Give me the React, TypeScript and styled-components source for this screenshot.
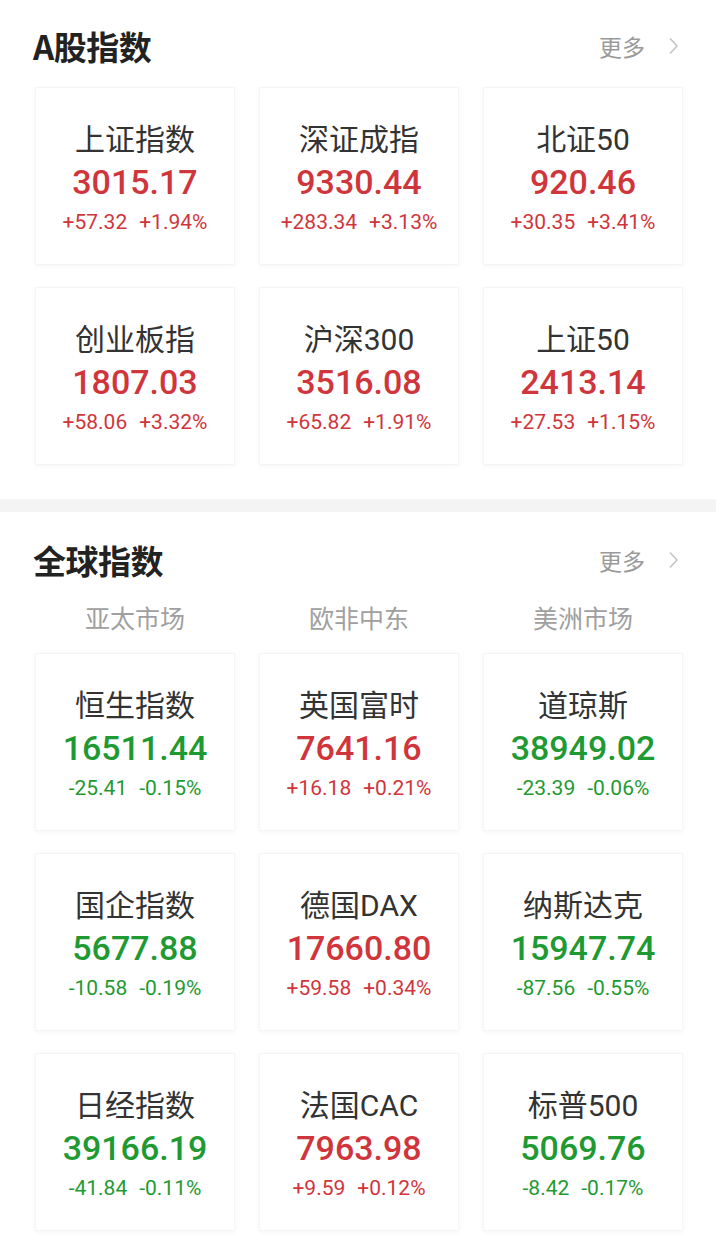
import React from 'react';
import styled, { createGlobalStyle } from 'styled-components';

type Tone = 'up' | 'down';

type IndexItem = {
  name: string;
  value: string;
  change: string;
  pct: string;
  tone: Tone;
};

const A_SHARES: IndexItem[] = [
  { name: '上证指数', value: '3015.17', change: '+57.32', pct: '+1.94%', tone: 'up' },
  { name: '深证成指', value: '9330.44', change: '+283.34', pct: '+3.13%', tone: 'up' },
  { name: '北证50', value: '920.46', change: '+30.35', pct: '+3.41%', tone: 'up' },
  { name: '创业板指', value: '1807.03', change: '+58.06', pct: '+3.32%', tone: 'up' },
  { name: '沪深300', value: '3516.08', change: '+65.82', pct: '+1.91%', tone: 'up' },
  { name: '上证50', value: '2413.14', change: '+27.53', pct: '+1.15%', tone: 'up' },
];

const MARKETS = ['亚太市场', '欧非中东', '美洲市场'];

const GLOBAL: IndexItem[] = [
  { name: '恒生指数', value: '16511.44', change: '-25.41', pct: '-0.15%', tone: 'down' },
  { name: '英国富时', value: '7641.16', change: '+16.18', pct: '+0.21%', tone: 'up' },
  { name: '道琼斯', value: '38949.02', change: '-23.39', pct: '-0.06%', tone: 'down' },
  { name: '国企指数', value: '5677.88', change: '-10.58', pct: '-0.19%', tone: 'down' },
  { name: '德国DAX', value: '17660.80', change: '+59.58', pct: '+0.34%', tone: 'up' },
  { name: '纳斯达克', value: '15947.74', change: '-87.56', pct: '-0.55%', tone: 'down' },
  { name: '日经指数', value: '39166.19', change: '-41.84', pct: '-0.11%', tone: 'down' },
  { name: '法国CAC', value: '7963.98', change: '+9.59', pct: '+0.12%', tone: 'up' },
  { name: '标普500', value: '5069.76', change: '-8.42', pct: '-0.17%', tone: 'down' },
];

const TONE_COLOR: Record<Tone, string> = {
  up: '#d0353b',
  down: '#1f9a32',
};

const GlobalStyle = createGlobalStyle`
  html, body {
    margin: 0;
    padding: 0;
    background: #fff;
  }

  body {
    font-family: Roboto, "Noto Sans CJK SC", "Noto Sans", sans-serif;
    -webkit-font-smoothing: antialiased;
  }
`;

const IndexCard = ({ item }: { item: IndexItem }) => (
  <Card>
    <Name>{item.name}</Name>
    <Value $tone={item.tone}>{item.value}</Value>
    <Change $tone={item.tone}>
      <span>{item.change}</span>
      <span>{item.pct}</span>
    </Change>
  </Card>
);

const SectionHeader = ({ title, top, height }: { title: string; top: number; height: number }) => (
  <Header $top={top} $height={height}>
    <Title>{title}</Title>
    <More>
      更多
      <svg width="12" height="20" viewBox="0 0 12 20" fill="none">
        <path d="M2.5 3 L9 10 L2.5 17" stroke="#c4c4c4" strokeWidth="1.6" strokeLinecap="round" strokeLinejoin="round" />
      </svg>
    </More>
  </Header>
);

const App = () => {
  return (
    <Page>
      <GlobalStyle />
      <Section $bottom={34}>
        <SectionHeader title="A股指数" top={4} height={87} />
        <Grid>
          {A_SHARES.map((item) => (
            <IndexCard item={item} key={item.name} />
          ))}
        </Grid>
      </Section>
      <Band />
      <Section $bottom={29}>
        <SectionHeader title="全球指数" top={10} height={86} />
        <MarketRow>
          {MARKETS.map((m) => (
            <MarketLabel key={m}>{m}</MarketLabel>
          ))}
        </MarketRow>
        <Grid>
          {GLOBAL.map((item) => (
            <IndexCard item={item} key={item.name} />
          ))}
        </Grid>
      </Section>
    </Page>
  );
};

export default App;

const Page = styled.div`
  width: 716px;
  min-height: 1260px;
  background: #fff;
  overflow: hidden;
`;

const Section = styled.section<{ $bottom: number }>`
  padding: 0 33px ${(p) => p.$bottom}px 35px;
`;

const Header = styled.div<{ $top: number; $height: number }>`
  box-sizing: border-box;
  height: ${(p) => p.$height}px;
  padding: ${(p) => p.$top}px 3px 0 0;
  margin-left: -2px;
  display: flex;
  align-items: center;
  justify-content: space-between;
`;

const Title = styled.div`
  font-family: "Noto Sans CJK SC", "Noto Sans", sans-serif;
  font-size: 33px;
  font-weight: 700;
  color: #222;
  letter-spacing: -0.5px;
`;

const More = styled.div`
  display: flex;
  align-items: center;
  gap: 23px;
  font-family: "Noto Sans CJK SC", sans-serif;
  font-size: 23px;
  color: #9a9a9a;

  svg {
    display: block;
  }
`;

const MarketRow = styled.div`
  display: grid;
  grid-template-columns: repeat(3, 200px);
  column-gap: 24px;
  height: 38px;
  margin-bottom: 17px;
  align-items: center;
`;

const MarketLabel = styled.div`
  text-align: center;
  font-family: "Noto Sans CJK SC", sans-serif;
  font-size: 25px;
  color: #a0a0a0;
`;

const Grid = styled.div`
  display: grid;
  grid-template-columns: repeat(3, 200px);
  grid-auto-rows: 178px;
  column-gap: 24px;
  row-gap: 22px;
`;

const Card = styled.div`
  box-sizing: border-box;
  background: #fff;
  border: 1px solid #f5f5f5;
  box-shadow: 0 1px 5px rgba(0, 0, 0, 0.045);
  display: flex;
  flex-direction: column;
  align-items: center;
  justify-content: center;
  padding-top: 8px;
`;

const Name = styled.div`
  font-family: Roboto, "Noto Sans CJK SC", sans-serif;
  font-size: 30px;
  line-height: 40px;
  color: #333;
`;

const Value = styled.div<{ $tone: Tone }>`
  font-family: Roboto, sans-serif;
  font-size: 34px;
  font-weight: 500;
  line-height: 44px;
  color: ${(p) => TONE_COLOR[p.$tone]};
`;

const Change = styled.div<{ $tone: Tone }>`
  display: flex;
  gap: 12px;
  font-family: Roboto, sans-serif;
  font-size: 21px;
  line-height: 36px;
  color: ${(p) => TONE_COLOR[p.$tone]};
`;

const Band = styled.div`
  height: 13px;
  background: #f4f4f4;
`;
